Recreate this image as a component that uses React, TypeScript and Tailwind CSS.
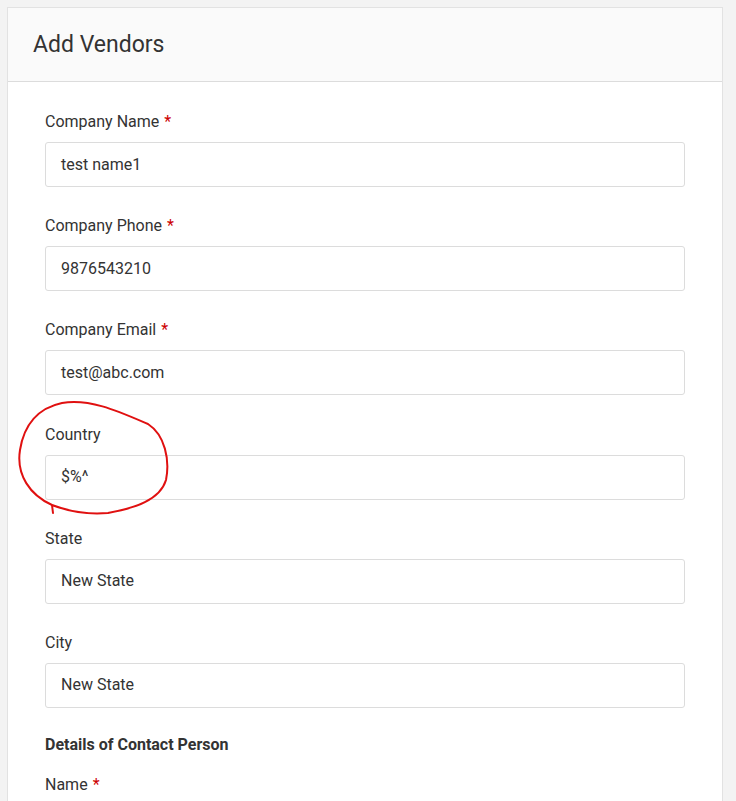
import React from "react";

const fields = [
  { label: "Company Name", value: "test name1", required: true },
  { label: "Company Phone", value: "9876543210", required: true },
  { label: "Company Email", value: "test@abc.com", required: true },
  { label: "Country", value: "$%^", required: false },
  { label: "State", value: "New State", required: false },
  { label: "City", value: "New State", required: false },
];

export default function App() {
  return (
    <div
      className="relative min-h-[801px] bg-[#f3f3f3] pl-[7px] pt-[7px] pr-[13px] overflow-hidden"
      style={{ fontFamily: "Roboto, 'Liberation Sans', sans-serif" }}
    >
      <div className="border border-[#e2e2e2] bg-white">
        <div className="h-[74px] border-b border-[#dcdcdc] bg-[#fafafa] pl-[25px] flex items-center">
          <h1 className="text-[23px] text-[#333] leading-none">Add Vendors</h1>
        </div>

        <div className="px-[37px] pt-[28px]">
          {fields.map((f) => (
            <div key={f.label} className="mb-[27.2px]">
              <label className="block text-[16px] leading-[24px] text-[#333] mb-[8px]">
                {f.label}
                {f.required && <span className="text-[#c00] ml-[5px]">*</span>}
              </label>
              <div className="h-[45px] rounded-[3px] border border-[#dcdcdc] bg-white px-[15px] flex items-center text-[16px] text-[#333]">
                {f.value}
              </div>
            </div>
          ))}

          <h3 className="text-[16px] font-bold leading-[24px] text-[#333] mt-[-2px]">
            Details of Contact Person
          </h3>
          <label className="block text-[16px] leading-[24px] text-[#333] mt-[16px]">
            Name<span className="text-[#c00] ml-[5px]">*</span>
          </label>
          <div className="h-[45px] mt-[9px]" />
        </div>
      </div>

      <svg
        className="absolute left-0 top-0 pointer-events-none"
        width="736"
        height="801"
        viewBox="0 0 736 801"
      >
        <path
          d="M52 505 C 30 495, 16 475, 20 450 C 24 425, 38 408, 62 403 C 90 398, 120 412, 148 424 C 165 435, 170 460, 166 480 C 160 500, 135 508, 108 513 C 85 515, 65 510, 52 505 L 53 513"
          fill="none"
          stroke="#e01010"
          strokeWidth="2"
          strokeLinecap="round"
          strokeLinejoin="round"
        />
      </svg>
    </div>
  );
}
